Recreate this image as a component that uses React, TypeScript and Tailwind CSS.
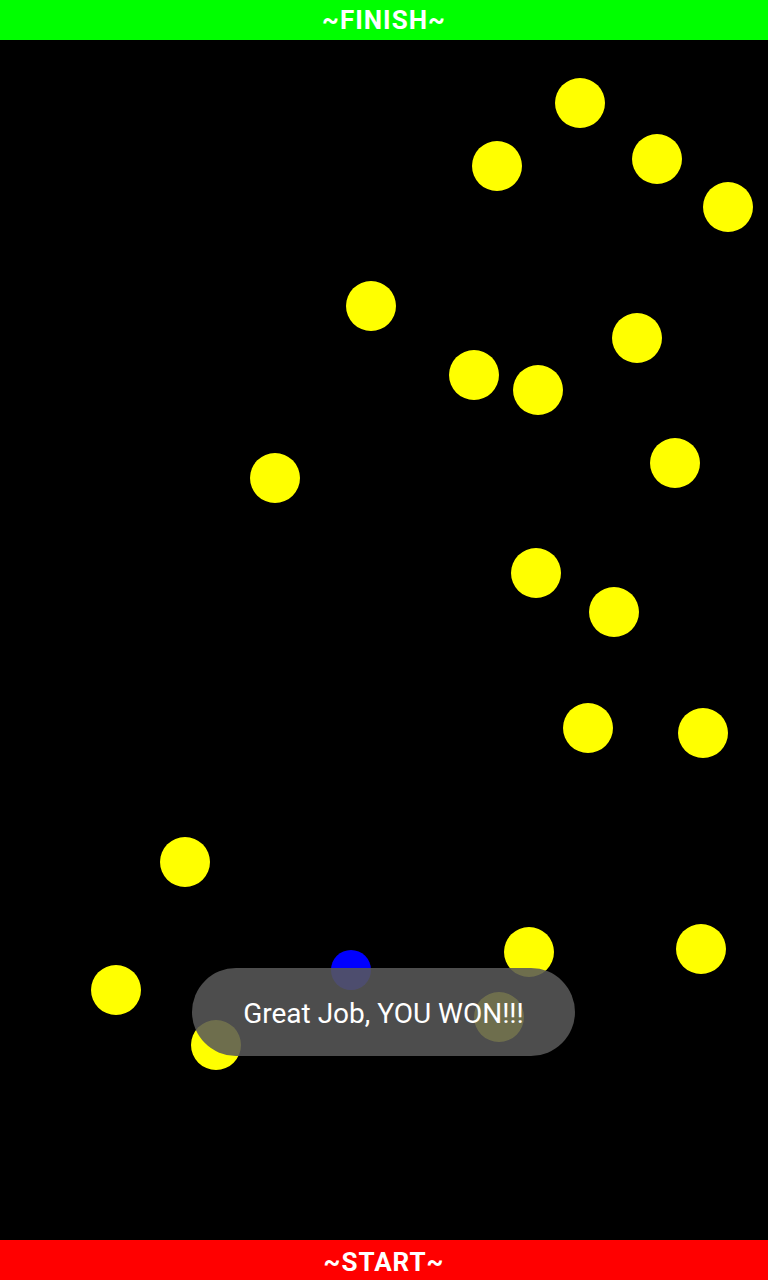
const balls: [number, number][] = [
  [580, 103],
  [497, 166],
  [657, 159],
  [728, 207],
  [371, 306],
  [637, 338],
  [474, 375],
  [538, 390],
  [275, 478],
  [675, 463],
  [536, 573],
  [614, 612],
  [588, 728],
  [703, 733],
  [185, 862],
  [529, 952],
  [701, 949],
  [116, 990],
  [216, 1045],
  [499, 1017],
];

export default function App() {
  return (
    <div className="flex h-[1280px] w-[768px] flex-col bg-black font-['Roboto',sans-serif]">
      <div className="flex h-10 items-center justify-center bg-[#00ff00] text-[26px] font-bold tracking-[1px] text-white">
        ~FINISH~
      </div>

      {/* playfield: ball coords are page coords, offset by the 40px header */}
      <div className="relative flex-1 overflow-hidden">
        {balls.map(([x, y], i) => (
          <div
            key={i}
            className="absolute h-[50px] w-[50px] rounded-full bg-[#ffff00]"
            style={{ left: x - 25, top: y - 40 - 25 }}
          />
        ))}
        <div className="absolute left-[331px] top-[910px] h-10 w-10 rounded-full bg-[#0000ff]" />

        <div className="absolute left-[192px] top-[928px] flex h-[88px] w-[383px] items-center justify-center rounded-full bg-[rgba(88,88,88,0.87)] pt-1">
          <span className="text-[28px] text-white">Great Job, YOU WON!!!</span>
        </div>
      </div>

      <div className="flex h-10 items-center justify-center bg-[#ff0000] pt-1 text-[26px] font-bold tracking-[1px] text-white">
        ~START~
      </div>
    </div>
  );
}
